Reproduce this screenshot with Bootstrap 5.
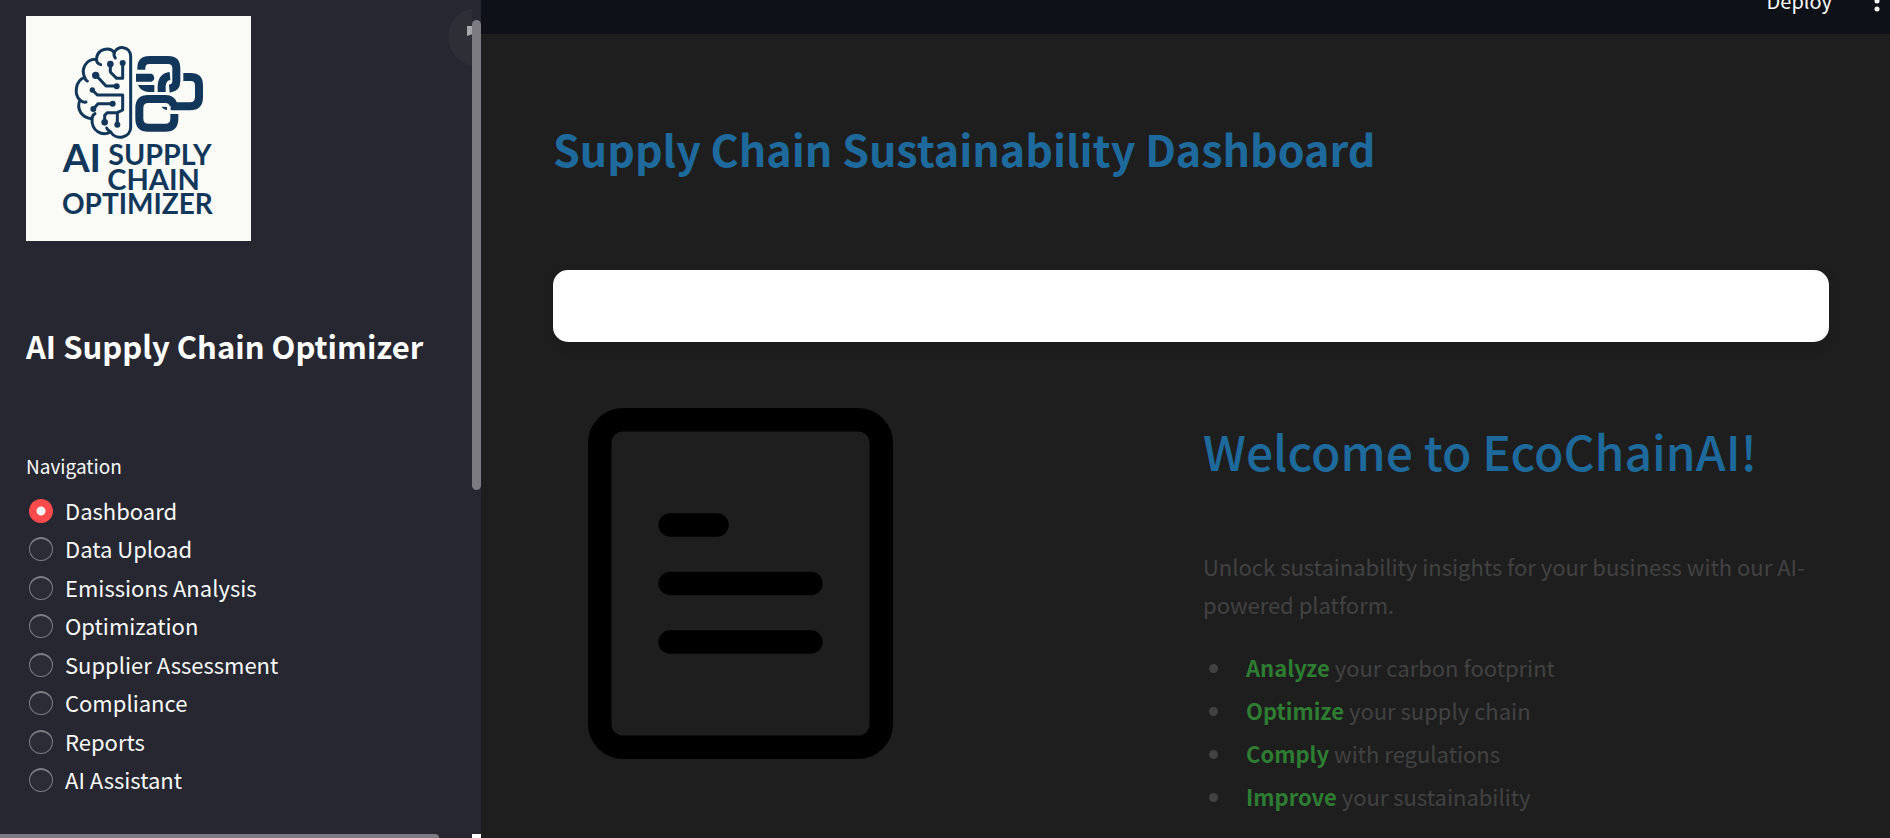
<!DOCTYPE html>
<html lang="en">
<head>
<meta charset="utf-8">
<meta name="viewport" content="width=device-width, initial-scale=1">
<title>Supply Chain Sustainability Dashboard</title>
<link href="https://cdn.jsdelivr.net/npm/bootstrap@5.3.0/dist/css/bootstrap.min.css" rel="stylesheet">
<style>
  body { font-family: "Noto Sans CJK SC", "Noto Sans", sans-serif; background: #1e1e1e; color: #fafafa; }
  .sidebar { display: grid; grid-template-columns: 1fr 9px; grid-template-rows: 1fr 4px; width: 481px; background: #262730; }
  .sidebar-body { padding: 16px 26px 0; }
  .logo { display: block; width: 225px; height: 225px; }
  .app-name { font-size: 31px; line-height: 40px; margin: 85px 0 0; white-space: nowrap; }
  .nav-title { font-size: 19px; line-height: 30px; margin: 85px 0 11px; }
  .nav-list { height: 307px; }
  .nav-choice { height: 38px; gap: 12px; padding-left: 3px; margin: 0; min-height: 0; }
  .nav-choice .form-check-input { float: none; width: 24px; height: 24px; margin: 0; background-color: #2b2c35; border: 1px solid #7c7c82; border-top-width: 2px; }
  .nav-choice .form-check-input:checked { background: #ff4b4b radial-gradient(circle, #f4f4f5 4px, #ff4b4b 5px); border: 0; }
  .nav-choice .form-check-label { font-size: 22px; line-height: 38px; padding-bottom: 2px; }
  .collapse-btn { top: 8px; right: -34px; width: 58px; height: 58px; background: #2e2e37; }
  .thumb-v { width: 9px; height: 470px; margin-top: 20px; border-radius: 5px; background: #7c7b82; }
  .thumb-h { width: 93%; height: 4px; border-radius: 0 4px 0 0; background: #7c7b82; }
  .topbar { height: 34px; padding-right: 8px; background: #0e1117; }
  .topbar button { height: 34px; margin-top: -16px; line-height: 34px; font-size: 20px; color: #fafafa; }
  .content-area { padding: 86px 61px 0 72px; }
  .page-title { font-size: 43px; line-height: 56px; color: #1f6a9c; margin: 0 0 94px; }
  .panel { height: 72px; border-radius: 15px; background: #fff; box-shadow: 0 4px 12px rgba(0,0,0,.1); margin-bottom: 66px; }
  .doc-icon { display: block; width: 305px; height: 351px; margin-left: 35px; }
  .welcome { font-size: 48px; line-height: 60px; font-weight: 500; color: #1f6a9c; margin: 12px 0 67px; }
  .muted-text { font-size: 22px; line-height: 38px; color: #424242; }
  .muted-text p { margin: 0 0 23px; }
  .muted-text ul { line-height: 43px; padding-left: 30px; margin: 0; }
  .muted-text li { padding-left: 13px; }
  .muted-text strong { color: #2e7d32; }
</style>
</head>
<body>
<div class="d-flex vh-100 overflow-hidden">
  <aside class="sidebar flex-shrink-0 overflow-hidden">
    <div class="sidebar-body position-relative overflow-hidden">
      <svg class="logo" viewBox="78 48 675 675" role="img" aria-label="AI Supply Chain Optimizer logo">
        <rect x="78" y="48" width="675" height="675" fill="#fafbf6"/>
        <g fill="none" stroke="#12375a" stroke-width="9" stroke-linecap="round" stroke-linejoin="round">
          <path d="M392 170C392 136 350 136 343 158C330 140 292 144 289 178C258 176 242 208 254 232C225 242 222 284 240 300C228 328 246 354 276 356C274 394 306 410 332 396C348 422 392 414 392 382Z"/>
          <path d="M289 178Q290 190 302 194M254 232Q256 240 262 243M240 300Q248 308 258 306M276 356Q277 345 285 341M332 396Q322 390 320 384M343 158Q340 166 346 174"/>
          <path d="M331 192V216L350 235H368V190M288 226L318 258H350M277 270L292 285H368V330L352 338H322L314 346V366M352 338V372M280 327L294 311H338"/>
        </g>
        <g fill="#12375a"><circle cx="331" cy="192" r="10"/><circle cx="368" cy="189" r="9"/><circle cx="287" cy="226" r="11"/><circle cx="350" cy="259" r="9"/><circle cx="277" cy="270" r="8"/><circle cx="338" cy="311" r="9"/><circle cx="280" cy="327" r="9"/><circle cx="314" cy="367" r="10"/><circle cx="352" cy="374" r="9"/></g>
        <g fill="none" stroke="#12375a" stroke-width="24">
          <path d="M424 209V204Q424 180 448 180H504Q529 180 529 205V244Q529 264 508 266"/>
          <path d="M485 276V258Q487 230 510 228"/>
          <path d="M550 231H572Q597 231 597 256V292Q597 319 570 319H512"/>
          <path d="M523 342V356Q523 383 496 383H445Q418 383 418 356V324Q418 297 445 297H496Q517 297 521 316"/>
        </g>
        <g fill="#12375a"><path d="M408 221H455Q463 225 463 234Q463 242 455 245H408ZM414 255H463V276H445Q422 274 414 255ZM484 320L501 321V331Q493 330 484 320Z"/></g>
        <g fill="#12375a" font-family="Lato, sans-serif" font-weight="700">
          <text x="188" y="517" font-size="116">AI</text>
          <text x="325" y="494" font-size="86">SUPPLY</text>
          <text x="322" y="570" font-size="87">CHAIN</text>
          <text x="186" y="642" font-size="84">OPTIMIZER</text>
        </g>
      </svg>
      <button class="collapse-btn btn rounded-circle border-0 p-0 position-absolute" type="button" aria-label="Collapse sidebar">
        <svg class="d-block" width="58" height="58" viewBox="0 0 58 58" aria-hidden="true"><path d="M19 18H30V26H25L19 28Z" fill="#a8a8ac"/></svg>
      </button>
      <h1 class="app-name fw-bold text-white">AI Supply Chain Optimizer</h1>
      <fieldset>
        <legend class="nav-title">Navigation</legend>
        <div class="nav-list d-flex flex-column justify-content-between">
          <div class="nav-choice form-check d-flex align-items-center"><input class="form-check-input" type="radio" name="page" id="p1" checked><label class="form-check-label" for="p1">Dashboard</label></div>
          <div class="nav-choice form-check d-flex align-items-center"><input class="form-check-input" type="radio" name="page" id="p2"><label class="form-check-label" for="p2">Data Upload</label></div>
          <div class="nav-choice form-check d-flex align-items-center"><input class="form-check-input" type="radio" name="page" id="p3"><label class="form-check-label" for="p3">Emissions Analysis</label></div>
          <div class="nav-choice form-check d-flex align-items-center"><input class="form-check-input" type="radio" name="page" id="p4"><label class="form-check-label" for="p4">Optimization</label></div>
          <div class="nav-choice form-check d-flex align-items-center"><input class="form-check-input" type="radio" name="page" id="p5"><label class="form-check-label" for="p5">Supplier Assessment</label></div>
          <div class="nav-choice form-check d-flex align-items-center"><input class="form-check-input" type="radio" name="page" id="p6"><label class="form-check-label" for="p6">Compliance</label></div>
          <div class="nav-choice form-check d-flex align-items-center"><input class="form-check-input" type="radio" name="page" id="p7"><label class="form-check-label" for="p7">Reports</label></div>
          <div class="nav-choice form-check d-flex align-items-center"><input class="form-check-input" type="radio" name="page" id="p8"><label class="form-check-label" for="p8">AI Assistant</label></div>
        </div>
      </fieldset>
    </div>
    <div><div class="thumb-v"></div></div>
    <div><div class="thumb-h"></div></div>
    <div class="bg-white"></div>
  </aside>
  <div class="flex-grow-1 overflow-hidden">
    <header class="topbar d-flex justify-content-end align-items-start overflow-hidden">
      <button class="btn border-0 p-0 me-4" type="button">Deploy</button>
      <button class="btn border-0 p-0 ms-3" type="button" aria-label="Menu">
        <svg class="d-block" width="10" height="34" viewBox="0 0 10 34" fill="#fafafa" aria-hidden="true"><circle cx="5" cy="9" r="2.5"/><circle cx="5" cy="17" r="2.5"/><circle cx="5" cy="25" r="2.5"/></svg>
      </button>
    </header>
    <main class="content-area">
      <h1 class="page-title fw-bold">Supply Chain Sustainability Dashboard</h1>
      <div class="panel"></div>
      <div class="row g-4 mt-0">
        <div class="col-6 mt-0">
          <svg class="doc-icon" viewBox="0 0 13 15" preserveAspectRatio="none" role="img" aria-label="Document">
            <rect x=".5" y=".5" width="12" height="14" rx="1" fill="none" stroke="#000"/>
            <path d="M3.5 5H5.5M3.5 7.5H9.5M3.5 10H9.5" stroke="#000" stroke-linecap="round"/>
          </svg>
        </div>
        <div class="col-6 mt-0">
          <h2 class="welcome">Welcome to EcoChainAI!</h2>
          <div class="muted-text">
            <p>Unlock sustainability insights for your business with our AI-powered platform.</p>
            <ul>
              <li><strong>Analyze</strong> your carbon footprint</li>
              <li><strong>Optimize</strong> your supply chain</li>
              <li><strong>Comply</strong> with regulations</li>
              <li><strong>Improve</strong> your sustainability</li>
            </ul>
          </div>
        </div>
      </div>
    </main>
  </div>
</div>
<script src="https://cdn.jsdelivr.net/npm/bootstrap@5.3.0/dist/js/bootstrap.bundle.min.js"></script>
</body>
</html>
